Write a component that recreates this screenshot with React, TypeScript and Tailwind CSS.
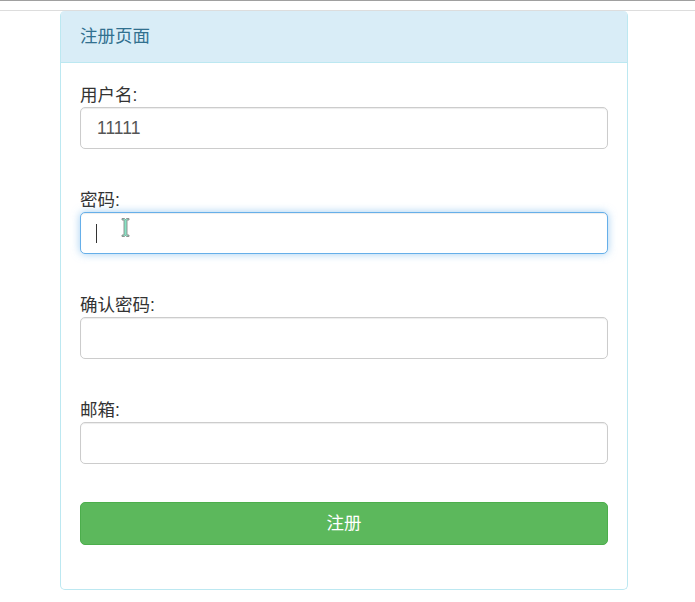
import React from "react";

const font = { fontFamily: '"Liberation Sans", "Noto Sans CJK SC", sans-serif' };

function Field({ label, children, focused }: { label: string; children?: React.ReactNode; focused?: boolean }) {
  return (
    <div className="flex flex-col">
      <div className="h-[22px] leading-[22px] text-[17.5px] text-[#333] mb-[1px]">{label}</div>
      <div
        className={
          "relative h-[42px] rounded-[5px] border bg-white flex items-center pl-[16px] text-[17.5px] text-[#555] " +
          (focused
            ? "border-[#66afe9] shadow-[inset_0_1px_1px_rgba(0,0,0,0.075),0_0_8px_rgba(102,175,233,0.6)]"
            : "border-[#cccccc] shadow-[inset_0_1px_1px_rgba(0,0,0,0.075)]")
        }
      >
        {children}
      </div>
    </div>
  );
}

export default function App() {
  return (
    <div className="w-[695px] h-[602px] bg-white relative overflow-hidden" style={font}>
      <div className="h-[1px] bg-[#a0a0a0]" />
      <div className="h-[9px]" />
      <div className="h-[1px] bg-[#dddddd]" />
      <div className="ml-[60px] w-[568px] h-[579px] border border-t-0 border-[#bce8f1] rounded-b-[5px] rounded-t-[5px] flex flex-col">
        <div className="h-[52px] bg-[#d9edf7] border-b border-[#bce8f1] rounded-t-[4px] flex items-center px-[19px] text-[17.5px] text-[#31708f] pb-[1px]">
          注册页面
        </div>
        <div className="px-[19px] pt-[21px] flex flex-col gap-[40px]">
          <Field label="用户名:">11111</Field>
          <Field label="密码:" focused>
            <div className="absolute left-[15px] top-[11px] w-[1px] h-[19px] bg-[#333]" />
            <svg className="absolute left-[40px] top-[4px]" width="9" height="21" viewBox="0 0 9 21">
              <path
                d="M1 1.5 H3.5 L4.5 2.5 L5.5 1.5 H8 V3 H6 V18 H8 V19.5 H5.5 L4.5 18.5 L3.5 19.5 H1 V18 H3 V3 H1 Z"
                fill="#86e3c4"
                stroke="#8a8a8a"
                strokeWidth="0.9"
              />
            </svg>
          </Field>
          <Field label="确认密码:" />
          <Field label="邮箱:" />
          <div className="h-[43px] mt-[-2px] rounded-[5px] bg-[#5cb85c] border border-[#4cae4c] flex items-center justify-center text-white text-[17.5px]">
            注册
          </div>
        </div>
      </div>
    </div>
  );
}
